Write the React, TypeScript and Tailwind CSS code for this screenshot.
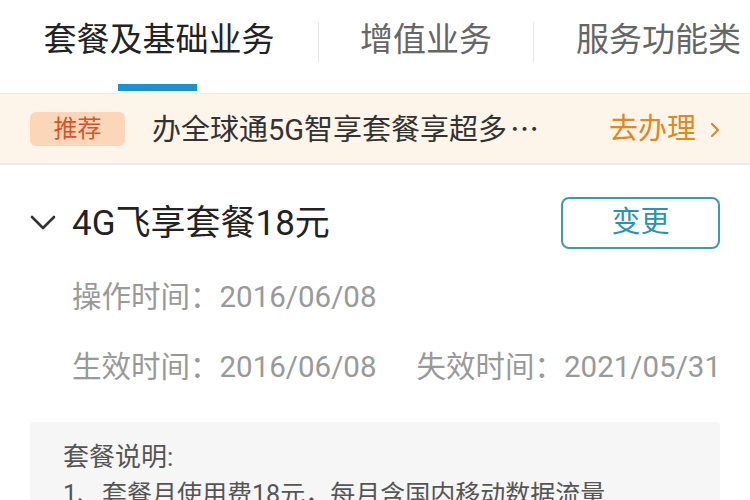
import React from 'react';

const font = { fontFamily: 'Roboto, "Noto Sans CJK SC", "Noto Sans", sans-serif' };
const cjk = { fontFamily: '"Noto Sans CJK SC", sans-serif' };

function Chevron() {
  return (
    <svg width="26" height="16" viewBox="0 0 26 16" fill="none" className="shrink-0">
      <path d="M2 2 L13 13 L24 2" stroke="#333" strokeWidth="2.6" strokeLinecap="round" strokeLinejoin="round" />
    </svg>
  );
}

export default function App() {
  return (
    <div className="w-[750px] h-[500px] overflow-hidden bg-white" style={font}>
      {/* tabs */}
      <div className="flex h-[93px] items-start">
        <div className="w-[318px] h-full flex flex-col items-center relative">
          <span className="mt-[18px] text-[33px] leading-[44px] text-[#222] whitespace-nowrap">套餐及基础业务</span>
          <div className="absolute top-[84px] left-[118px] w-[79px] h-[7px] bg-[#1b8fd8]" />
        </div>
        <div className="w-px h-[40px] mt-[22px] bg-[#e8e8e8]" />
        <div className="w-[214px] h-full flex justify-center">
          <span className="mt-[18px] text-[33px] leading-[44px] text-[#666] whitespace-nowrap">增值业务</span>
        </div>
        <div className="w-px h-[40px] mt-[22px] bg-[#e8e8e8]" />
        <div className="flex-1 pl-[42px]">
          <span className="block mt-[18px] text-[33px] leading-[44px] text-[#666] whitespace-nowrap">服务功能类</span>
        </div>
      </div>

      {/* banner */}
      <div className="h-[72px] bg-[#fdf5e9] border-t border-[#f0ebe4] border-b-2 border-b-[#ececec] flex items-center px-[30px]">
        <span className="w-[95px] h-[34px] rounded-[6px] bg-[#fbd6b8] text-[#d9532a] text-[24px] leading-[34px] text-center">推荐</span>
        <span className="ml-[27px] mt-[2px] text-[29px] text-[#333] whitespace-nowrap">
          办全球通5G智享套餐享超多<span style={cjk} className="ml-[3px]">…</span>
        </span>
        <span className="ml-auto mt-[2px] text-[29px] text-[#e0871f] whitespace-nowrap flex items-center gap-[14px]">
          去办理
          <svg width="10" height="16" viewBox="0 0 10 16" fill="none">
            <path d="M2 2 L8 8 L2 14" stroke="#e0871f" strokeWidth="2.2" strokeLinecap="round" strokeLinejoin="round" />
          </svg>
        </span>
      </div>

      {/* package */}
      <div className="px-[30px] pt-[32px]">
        <div className="flex items-center justify-between">
          <div className="flex items-center">
            <Chevron />
            <span className="ml-[16px] mt-[2px] text-[35px] leading-[44px] text-[#222]">4G飞享套餐18元</span>
          </div>
          <button className="w-[159px] h-[52px] rounded-[8px] border-2 border-[#3a9cb3] text-[#2a92b6] text-[29px]">变更</button>
        </div>
        <div className="pl-[42px] mt-[28px] text-[29.5px] leading-[40px] text-[#999] whitespace-nowrap">
          操作时间：2016/06/08
        </div>
        <div className="pl-[42px] mt-[30px] text-[29.5px] leading-[40px] text-[#999] flex whitespace-nowrap">
          <span>生效时间：2016/06/08</span>
          <span className="ml-[40px]">失效时间：2021/05/31</span>
        </div>
        <div className="mt-[35px] bg-[#f6f6f6] rounded-[4px] px-[33px] pt-[18px] pb-[20px] text-[#555]">
          <div className="text-[26px] leading-[34px]">套餐说明:</div>
          <div className="text-[25px] leading-[34px] mt-[4px] whitespace-nowrap">1、套餐月使用费18元，每月含国内移动数据流量</div>
        </div>
      </div>
    </div>
  );
}
